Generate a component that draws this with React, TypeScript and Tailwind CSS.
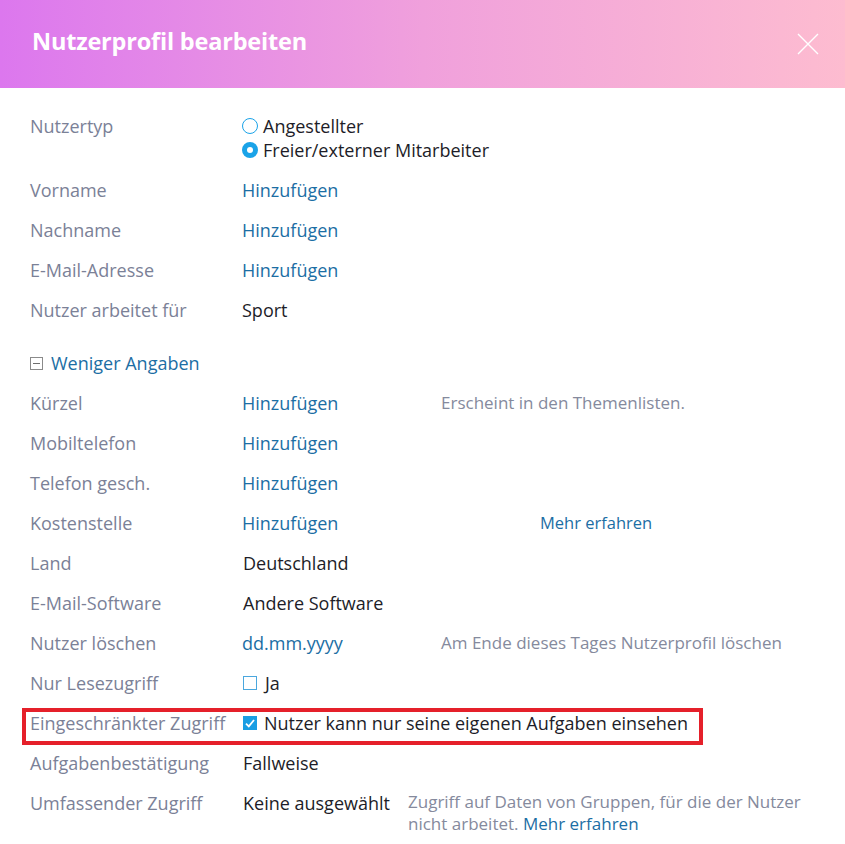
import type { ReactNode } from 'react'

const FONT = { fontFamily: '"Open Sans", "Noto Sans", Arial, sans-serif' }

function Row({ label, children, className = '' }: { label: string; children?: ReactNode; className?: string }) {
  return (
    <div className={`flex py-2 leading-6 ${className}`}>
      <div className="w-[212px] shrink-0 text-[18px] text-[#7b8197]">{label}</div>
      <div className="flex min-w-0 flex-1">{children}</div>
    </div>
  )
}

function Add() {
  return <span className="w-[199px] shrink-0 text-[18px] text-[#1c6ea4]">Hinzufügen</span>
}

function Hint({ children }: { children: ReactNode }) {
  return <span className="text-[17px] text-[#858a9d]">{children}</span>
}

function Radio({ checked, label }: { checked?: boolean; label: string }) {
  return (
    <label className="flex items-center gap-[5px] text-[18px] text-[#1d1d28]">
      {checked ? (
        <span className="flex h-4 w-4 items-center justify-center rounded-full bg-[#1aa3e8]">
          <span className="h-[6px] w-[6px] rounded-full bg-white" />
        </span>
      ) : (
        <span className="h-4 w-4 rounded-full border border-[#1aa3e8] bg-white" />
      )}
      {label}
    </label>
  )
}

export default function App() {
  return (
    <div className="min-h-screen w-[845px] bg-white" style={FONT}>
      <header className="flex h-[88px] items-center justify-between bg-gradient-to-r from-[#dc77ee] via-[#f0a0dc] to-[#fdbcd0] pl-8 pr-[26px]">
        <h1 className="-mt-[5px] text-[23.5px] font-bold tracking-[-0.2px] text-white">Nutzerprofil bearbeiten</h1>
        <button className="text-white" aria-label="Schließen">
          <svg width="22" height="22" viewBox="0 0 22 22" fill="none" stroke="currentColor" strokeWidth="1.4">
            <path d="M1 1 L21 21 M21 1 L1 21" />
          </svg>
        </button>
      </header>

      <div className="px-[30px] pt-[18px]">
        <Row label="Nutzertyp">
          <div className="flex flex-col">
            <Radio label="Angestellter" />
            <Radio checked label="Freier/externer Mitarbeiter" />
          </div>
        </Row>
        <Row label="Vorname"><Add /></Row>
        <Row label="Nachname"><Add /></Row>
        <Row label="E-Mail-Adresse"><Add /></Row>
        <Row label="Nutzer arbeitet für">
          <span className="text-[18px] text-[#1d1d28]">Sport</span>
        </Row>

        <div className="mt-[13px] flex items-center gap-2 py-2 leading-6">
          <span className="flex h-[13px] w-[13px] items-center justify-center border border-[#8a8a8a]">
            <span className="h-px w-[7px] bg-[#6e6e6e]" />
          </span>
          <span className="text-[18px] text-[#1c6ea4]">Weniger Angaben</span>
        </div>

        <Row label="Kürzel">
          <Add />
          <Hint>Erscheint in den Themenlisten.</Hint>
        </Row>
        <Row label="Mobiltelefon"><Add /></Row>
        <Row label="Telefon gesch."><Add /></Row>
        <Row label="Kostenstelle">
          <Add />
          <span className="pl-[99px] text-[16.5px] text-[#1c6ea4]">Mehr erfahren</span>
        </Row>
        <Row label="Land">
          <span className="pl-px text-[18px] text-[#1d1d28]">Deutschland</span>
        </Row>
        <Row label="E-Mail-Software">
          <span className="pl-px text-[18px] text-[#1d1d28]">Andere Software</span>
        </Row>
        <Row label="Nutzer löschen">
          <span className="w-[199px] shrink-0 text-[18px] text-[#1c6ea4]">dd.mm.yyyy</span>
          <Hint>Am Ende dieses Tages Nutzerprofil löschen</Hint>
        </Row>
        <Row label="Nur Lesezugriff">
          <label className="flex items-center gap-2 pl-px text-[18px] text-[#1d1d28]">
            <span className="h-[14px] w-[14px] border border-[#4ba7de] bg-white" />
            Ja
          </label>
        </Row>

        {/* highlighted row */}
        <div className="-mx-2 mt-[5px] -mb-[2px] h-[37px] w-[681px] border-4 border-[#e5202a] pl-1">
          <div className="-mt-px flex leading-6">
            <div className="w-[212px] shrink-0 text-[18px] text-[#7b8197]">Eingeschränkter Zugriff</div>
            <label className="flex items-center gap-[7px] pl-px text-[18px] text-[#1d1d28]">
              <span className="flex h-[14px] w-[14px] items-center justify-center bg-[#1a9ee3]">
                <svg width="10" height="9" viewBox="0 0 10 9" fill="none" stroke="white" strokeWidth="1.8">
                  <path d="M1 4.6 L3.8 7.4 L9 1" />
                </svg>
              </span>
              Nutzer kann nur seine eigenen Aufgaben einsehen
            </label>
          </div>
        </div>

        <Row label="Aufgabenbestätigung">
          <span className="pl-px text-[18px] text-[#1d1d28]">Fallweise</span>
        </Row>
        <Row label="Umfassender Zugriff">
          <span className="w-[166px] shrink-0 pl-px text-[18px] text-[#1d1d28]">Keine ausgewählt</span>
          <span className="text-[17px] leading-[22px] text-[#858a9d]">
            Zugriff auf Daten von Gruppen, für die der Nutzer
            <br />
            nicht arbeitet. <span className="text-[#1c6ea4]">Mehr erfahren</span>
          </span>
        </Row>
      </div>
    </div>
  )
}
